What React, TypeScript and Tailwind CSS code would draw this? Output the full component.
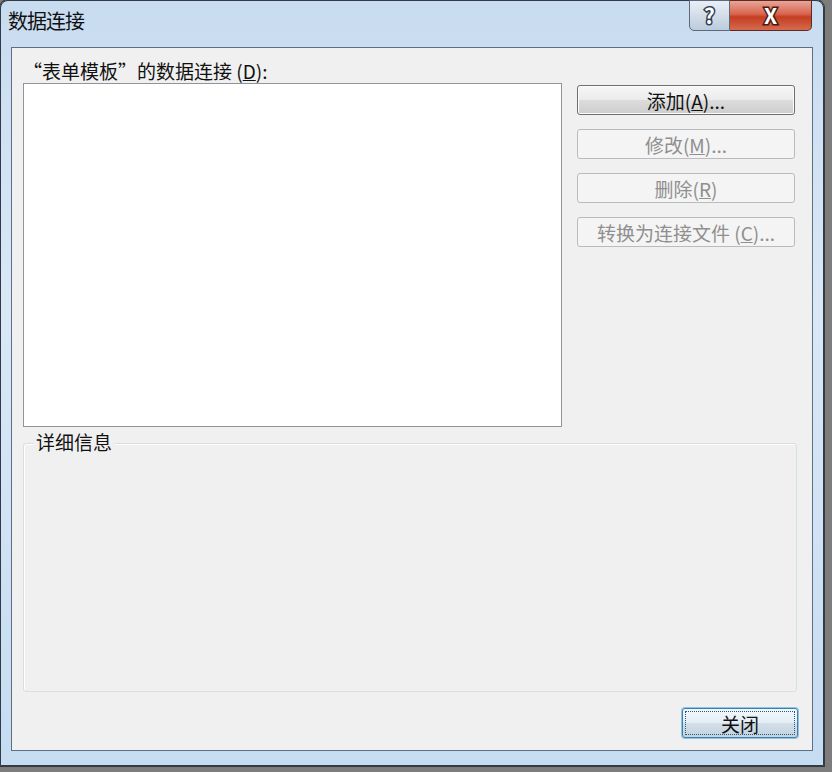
import React from "react";

const font = { fontFamily: '"Noto Sans CJK SC", "Noto Sans", sans-serif' };

function Btn({ children, disabled }: { children: React.ReactNode; disabled?: boolean }) {
  return (
    <div
      className={
        "h-[30px] w-[218px] flex items-center justify-center rounded-[3px] border text-[19px] leading-none " +
        (disabled
          ? "border-[#b8bcc0] bg-[#f4f4f4] text-[#8f8f8f]"
          : "border-[#6f6f6f] bg-[linear-gradient(to_bottom,#f6f6f6_0%,#ececec_48%,#dcdcdc_52%,#cdcdcd_100%)] text-[#111] shadow-[inset_0_0_0_1px_#fbfbfb]")
      }
    >
      {children}
    </div>
  );
}

export default function App() {
  return (
    <div className="w-[832px] h-[772px] bg-[#7d7d7d] overflow-hidden" style={font}>
      <div className="w-[824px] h-[766px] rounded-t-[8px] border border-[#2f3b48] bg-[linear-gradient(to_bottom,#c8dcf0_0%,#dae8f6_40%,#c6dcf1_100%)] flex flex-col shadow-[0_0_0_1px_#3a3a3a]">
        {/* title bar */}
        <div className="h-[46px] flex items-start justify-between">
          <div className="pl-[7px] pt-[10px] text-[20px] leading-none text-[#111] tracking-[-1px]">数据连接</div>
          <div className="flex mr-[11px] -mt-px">
            <div className="w-[41px] h-[31px] rounded-bl-[5px] border border-[#5c6b7c] bg-[linear-gradient(to_bottom,#e9eff6_0%,#d3dde9_50%,#bccbdc_100%)] flex items-center justify-center text-[21px] font-bold text-white [-webkit-text-stroke:3px_#2e3e50] [paint-order:stroke_fill]">
              ?
            </div>
            <div className="w-[82px] h-[31px] rounded-br-[5px] border border-l-0 border-[#5a2a24] bg-[linear-gradient(to_bottom,#e8a596_0%,#d9644f_45%,#c43d22_55%,#d76a4e_100%)] flex items-center justify-center text-[21px] font-bold text-white [-webkit-text-stroke:3px_#4a1a10] [paint-order:stroke_fill]">
              X
            </div>
          </div>
        </div>

        {/* client area */}
        <div className="mx-[10px] mb-[14px] flex-1 border border-[#5c6f84] bg-[#f0f0f0] flex flex-col px-[11px]">
          <div className="pt-[13px] h-[35px] text-[19px] leading-none text-[#111]">
            “表单模板”的数据连接 (<span className="underline">D</span>):
          </div>
          <div className="flex">
            <div className="w-[539px] h-[344px] border border-[#8e949b] bg-white" />
            <div className="ml-[15px] mt-[2px] flex flex-col gap-[14px]">
              <Btn>
                添加(<span className="underline">A</span>)...
              </Btn>
              <Btn disabled>
                修改(<span className="underline">M</span>)...
              </Btn>
              <Btn disabled>
                删除(<span className="underline">R</span>)
              </Btn>
              <Btn disabled>
                转换为连接文件 (<span className="underline">C</span>)...
              </Btn>
            </div>
          </div>

          {/* group box */}
          <div className="relative mt-[16px] h-[249px] w-[774px] rounded-[3px] border border-[#d5dfe5] shadow-[inset_1px_1px_0_#ffffff]">
            <div className="absolute -top-[12px] left-[9px] bg-[#f0f0f0] px-[3px] text-[19px] leading-none text-[#111]">
              详细信息
            </div>
          </div>

          <div className="flex justify-end mt-[16px] pr-[3px]">
            <div className="w-[116px] h-[30px] rounded-[3px] border border-[#3c7fb1] bg-[linear-gradient(to_bottom,#f2f8fc_0%,#e4eef6_48%,#d2dee8_52%,#c4d3df_100%)] p-[2px] shadow-[0_0_0_1px_#8fc5e0]">
              <div className="w-full h-full border border-dotted border-[#2a5878] flex items-center justify-center text-[19px] leading-none text-[#111]">
                关闭
              </div>
            </div>
          </div>
        </div>
      </div>
    </div>
  );
}
